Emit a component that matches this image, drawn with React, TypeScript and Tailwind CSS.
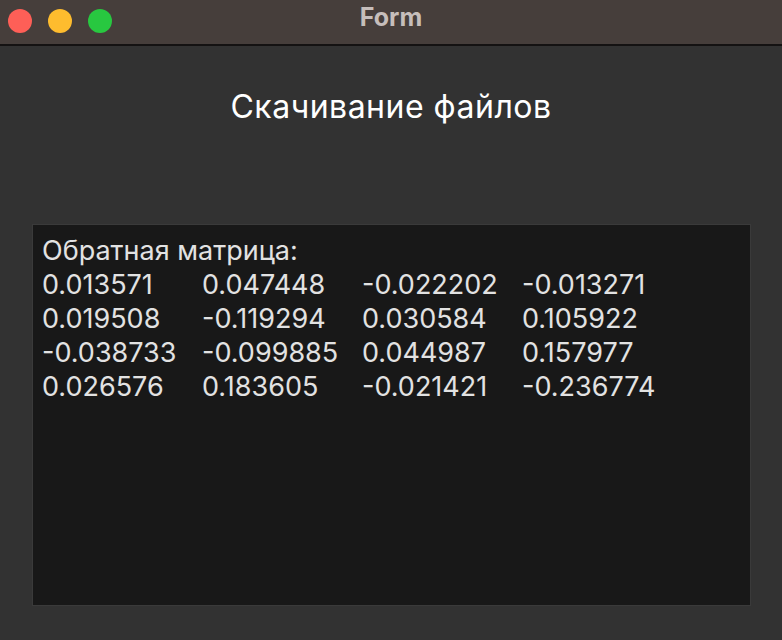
const rows = [
  ["0.013571", "0.047448", "-0.022202", "-0.013271"],
  ["0.019508", "-0.119294", "0.030584", "0.105922"],
  ["-0.038733", "-0.099885", "0.044987", "0.157977"],
  ["0.026576", "0.183605", "-0.021421", "-0.236774"],
];

export default function App() {
  return (
    <div
      className="w-[782px] h-[640px] flex flex-col bg-[#323232] overflow-hidden"
      style={{ fontFamily: "Inter, 'Noto Sans', sans-serif" }}
    >
      {/* title bar */}
      <div className="relative h-[46px] shrink-0 bg-[#463e3b] border-b-2 border-[#141212] flex items-center">
        <div className="flex items-center gap-4 pl-2 pb-[3px]">
          <span className="w-6 h-6 rounded-full bg-[#fe5f57]" />
          <span className="w-6 h-6 rounded-full bg-[#febc2e]" />
          <span className="w-6 h-6 rounded-full bg-[#28c840]" />
        </div>
        <div className="absolute inset-0 flex items-center justify-center text-[25px] font-bold text-[#c6bebb] pb-[9px]">
          Form
        </div>
      </div>

      {/* heading */}
      <div className="h-[178px] shrink-0 flex justify-center pt-[42px]">
        <h1 className="text-[32px] leading-[38px] text-white tracking-[0.5px]">Скачивание файлов</h1>
      </div>

      {/* text output */}
      <div className="ml-8 w-[719px] h-[382px] bg-[#181818] border border-[#3a3a3a] pl-[9px] pt-[9px] text-[27px] leading-[34px] text-[#e2e2e2]">
        <div>Обратная матрица:</div>
        {rows.map((row, i) => (
          <div key={i} className="grid grid-cols-[160px_160px_160px_160px]">
            {row.map((v, j) => (
              <span key={j}>{v}</span>
            ))}
          </div>
        ))}
      </div>
    </div>
  );
}
